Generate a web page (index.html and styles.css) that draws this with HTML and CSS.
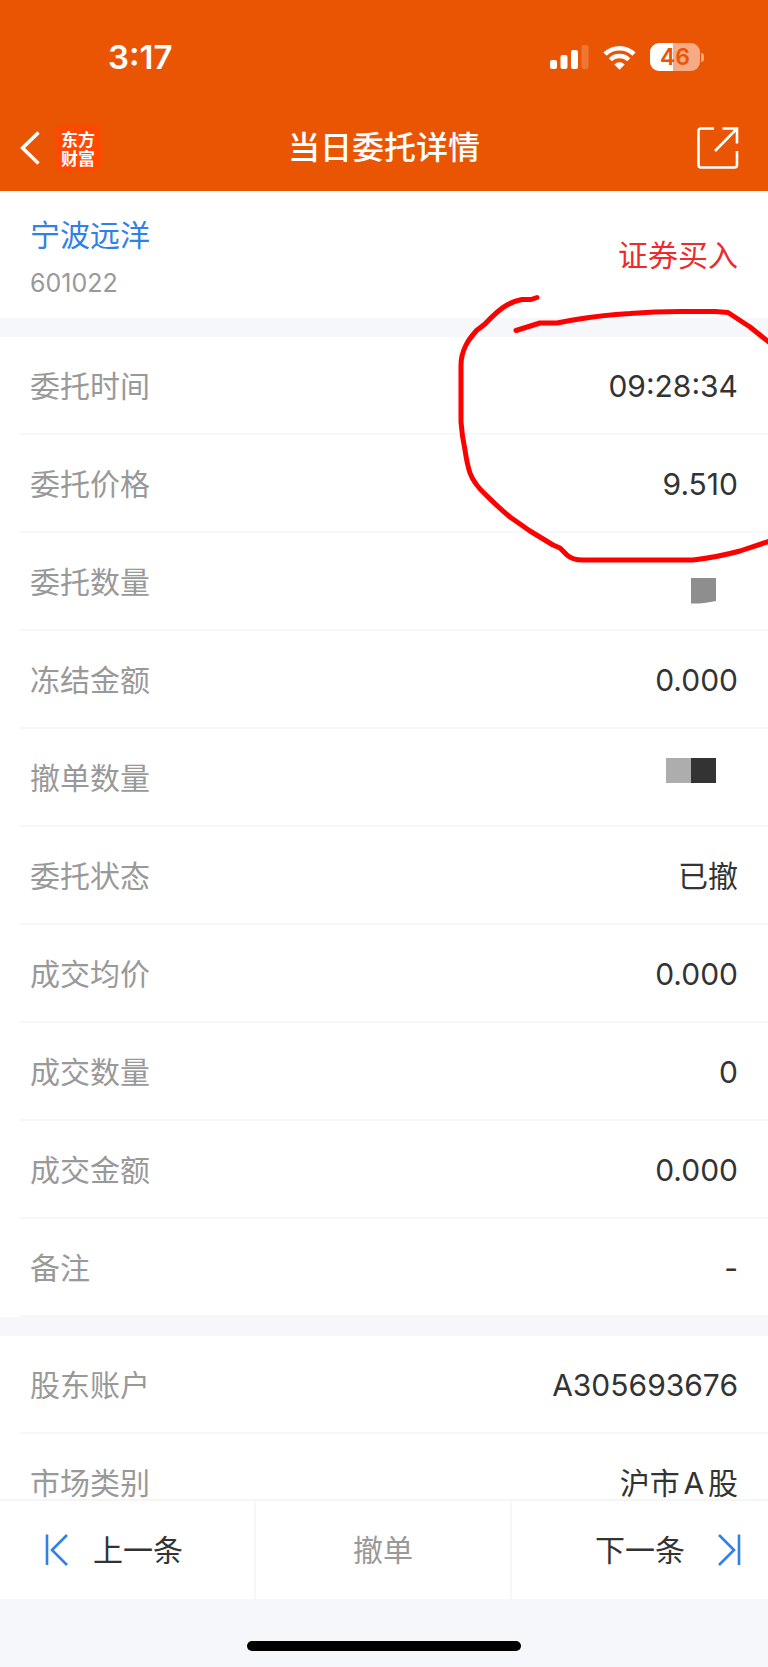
FILE: index.html
```html
<!DOCTYPE html>
<html lang="zh-CN">
<head>
    <meta charset="UTF-8">
    <meta name="viewport" content="width=device-width, initial-scale=1.0">
    <title>当日委托详情</title>
    <link rel="stylesheet" href="styles.css">
</head>
<body>
    <header class="header">
        <div class="status-bar">
            <span class="time">3:17</span>
            <div class="status-icons">
                <svg class="signal" width="39" height="24" viewBox="0 0 39 24" fill="#fff">
                    <rect x="0" y="15" width="7" height="9" rx="2"/>
                    <rect x="10.500" y="10" width="7" height="14" rx="2"/>
                    <rect x="21" y="5" width="7" height="19" rx="2"/>
                    <rect x="31.500" y="0" width="7" height="24" rx="2" opacity="0.2"/>
                </svg>
                <svg class="wifi" width="33" height="25" viewBox="0 0 33 25">
                    <path d="M2 9.200a20.500 20.500 0 0 1 29 0" fill="none" stroke="#fff" stroke-width="4.600"/>
                    <path d="M7.300 14.800a13 13 0 0 1 18.400 0" fill="none" stroke="#fff" stroke-width="4.400"/>
                    <path d="M11.300 19.400a7.400 7.400 0 0 1 10.400 0L16.500 24.800z" fill="#fff"/>
                </svg>
                <div class="battery">
                    <span class="battery-body">46</span>
                    <span class="battery-tip"></span>
                </div>
            </div>
        </div>
        <nav class="nav-bar">
            <div class="nav-left">
                <button class="icon-button" type="button" aria-label="返回">
                    <svg width="20" height="34" viewBox="0 0 20 34" fill="none" stroke="#fff" stroke-width="3.600">
                        <path d="M18.500 1.500L2.500 17l16 15.500"/>
                    </svg>
                </button>
                <a class="logo" href="#">东方财富</a>
            </div>
            <h1 class="title">当日委托详情</h1>
            <button class="icon-button share" type="button" aria-label="分享">
                <svg width="42" height="42" viewBox="0 0 42 42" fill="none" stroke="#fff" stroke-width="2.600">
                    <path d="M17 1.500H4Q1.500 1.500 1.500 4V38Q1.500 40.500 4 40.500H37.500Q40 40.500 40 38V24"/>
                    <path d="M25.500 1.500H40V16.500M40 1.500L18 24"/>
                </svg>
            </button>
        </nav>
    </header>

    <main class="content">
        <section class="stock">
            <div>
                <a class="stock-name" href="#">宁波远洋</a>
                <div class="stock-code">601022</div>
            </div>
            <span class="side">证券买入</span>
        </section>

        <section class="panel">
            <dl class="details">
                <div class="row"><dt>委托时间</dt><dd>09:28:34</dd></div>
                <div class="row"><dt>委托价格</dt><dd>9.510</dd></div>
                <div class="row">
                    <dt>委托数量</dt>
                    <dd>
                        <svg class="mask" width="72" height="52" viewBox="0 0 72 52">
                            <path d="M25 22h25v23q-12 2-17 2.500h-8z" fill="#8e8e8e"/>
                        </svg>
                    </dd>
                </div>
                <div class="row"><dt>冻结金额</dt><dd>0.000</dd></div>
                <div class="row">
                    <dt>撤单数量</dt>
                    <dd>
                        <svg class="mask" width="72" height="52" viewBox="0 0 72 52">
                            <path d="M0 6h25v25h-25z" fill="#adadad"/>
                            <path d="M25 6h25v25h-25z" fill="#333"/>
                        </svg>
                    </dd>
                </div>
                <div class="row"><dt>委托状态</dt><dd>已撤</dd></div>
                <div class="row"><dt>成交均价</dt><dd>0.000</dd></div>
                <div class="row"><dt>成交数量</dt><dd>0</dd></div>
                <div class="row"><dt>成交金额</dt><dd>0.000</dd></div>
                <div class="row"><dt>备注</dt><dd>-</dd></div>
            </dl>
            <!-- Red pen mark around time and price -->
            <svg class="pen-mark" width="320" height="286" viewBox="448 286 320 286" fill="none" stroke="#f00" stroke-width="5" stroke-linecap="round" stroke-linejoin="round">
                <path d="M537 297.500L531 299.500H522Q514 301 507 305Q498 310 485 324Q480 328 477 330Q469 339 466 345Q461 355 461 365V422Q462 436 465 450Q467 464 470 473Q474 484 486 495Q498 507 510 517Q520 524 530 531L553 545L560 548L567 555Q572 560 583 560H693Q718 557 740 551L770 541"/>
                <path d="M516 330.500L540 323H557L573 320Q602 315 630 313.500Q655 311.500 680 311.500H715L728 312.500L750 327L770 343"/>
            </svg>
        </section>

        <section class="panel">
            <dl class="details">
                <div class="row"><dt>股东账户</dt><dd>A305693676</dd></div>
                <div class="row"><dt>市场类别</dt><dd>沪市A股</dd></div>
            </dl>
        </section>
    </main>

    <footer class="footer">
        <div class="actions">
            <button class="action prev" type="button">
                <svg width="23" height="32" viewBox="0 0 23 32" fill="none" stroke="#2f80e7" stroke-width="2.600">
                    <path d="M2 0.500V31M22 1L7 16l15 15"/>
                </svg>
                上一条
            </button>
            <button class="action cancel" type="button" disabled>撤单</button>
            <button class="action next" type="button">
                下一条
                <svg width="23" height="32" viewBox="0 0 23 32" fill="none" stroke="#2f80e7" stroke-width="2.600">
                    <path d="M21 0.500V31M1 1l15 15L1 31"/>
                </svg>
            </button>
        </div>
        <div class="home-area">
            <div class="home-bar"></div>
        </div>
    </footer>
</body>
</html>
```

FILE: styles.css
```css
* {
    box-sizing: border-box;
}
body {
    margin: 0;
    height: 100vh;
    display: flex;
    flex-direction: column;
    font-family: Inter, "Noto Sans CJK SC", sans-serif;
    font-size: 30px;
    line-height: 44px;
    background-color: #f5f7fa;
    color: #333;
}
a {
    text-decoration: none;
}
button {
    padding: 0;
    border: none;
    background: none;
    font: inherit;
    color: inherit;
    cursor: pointer;
}
svg {
    display: block;
    flex-shrink: 0;
}

/* Header */
.header {
    flex-shrink: 0;
    background-color: #ea5504;
    color: #fff;
}
.status-bar {
    display: flex;
    justify-content: space-between;
    align-items: center;
    height: 105px;
    padding: 9px 64px 0 108px;
}
.time {
    font-size: 33px;
    font-weight: 600;
}
.status-icons {
    display: flex;
    align-items: center;
    gap: 14px;
}
.battery {
    display: flex;
    align-items: center;
    gap: 1px;
}
.battery-body {
    width: 50px;
    height: 28px;
    border-radius: 9px;
    background: linear-gradient(to right, #fff 47%, #f5ab83 47%);
    color: #ea5504;
    font-size: 23px;
    font-weight: 600;
    line-height: 28px;
    text-align: center;
}
.battery-tip {
    width: 3px;
    height: 9px;
    border-radius: 0 3px 3px 0;
    background-color: #f5ab83;
}
.nav-bar {
    display: grid;
    grid-template-columns: 1fr auto 1fr;
    align-items: center;
    height: 86px;
    padding: 0 20px;
}
.nav-left {
    display: flex;
    align-items: center;
    gap: 15px;
}
.logo {
    width: 46px;
    height: 46px;
    padding: 4px 6px;
    border-radius: 8px;
    background-color: #ff4800;
    color: #fff;
    font-family: "Noto Sans CJK SC", sans-serif;
    font-size: 17px;
    font-weight: 700;
    line-height: 19px;
}
.title {
    margin: 0;
    font-size: 32px;
    font-weight: 500;
}
.share {
    justify-self: end;
    margin-right: 9px;
}

/* Content */
.content {
    flex: 1;
    min-height: 0;
    overflow: hidden;
}
.stock {
    display: flex;
    justify-content: space-between;
    align-items: center;
    padding: 19px 30px;
    background-color: #fff;
}
.stock-name {
    display: block;
    color: #2f80e7;
    line-height: 50px;
}
.stock-code {
    margin-top: 7px;
    color: #999;
    font-size: 25px;
    line-height: 32px;
}
.side {
    color: #ee2a2a;
}
.panel {
    position: relative;
    margin-top: 19px;
    background-color: #fff;
}
.details {
    margin: 0;
}
.row {
    display: flex;
    justify-content: space-between;
    align-items: center;
    height: 98px;
    margin-left: 20px;
    padding: 2px 30px 0 10px;
    border-bottom: 2px solid #f7f7f8;
}
.row dt {
    color: #999;
}
.row dd {
    margin: 0;
    text-autospace: normal;
}
.pen-mark {
    position: absolute;
    top: -51px;
    right: 0;
}

/* Footer */
.footer {
    flex-shrink: 0;
}
.actions {
    display: grid;
    grid-template-columns: repeat(3, 1fr);
    border-top: 2px solid #f5f5f6;
    background-color: #fff;
}
.action {
    display: flex;
    align-items: center;
    height: 98px;
    border-right: 2px solid #f7f7f8;
}
.prev {
    gap: 25px;
    padding-left: 45px;
}
.cancel {
    justify-content: center;
    color: #999;
}
.next {
    justify-content: flex-end;
    gap: 33px;
    padding-right: 27px;
    border-right: none;
}
.home-area {
    display: flex;
    justify-content: center;
    padding: 42px 0 16px;
}
.home-bar {
    width: 274px;
    height: 10px;
    border-radius: 5px;
    background-color: #000;
}
```
